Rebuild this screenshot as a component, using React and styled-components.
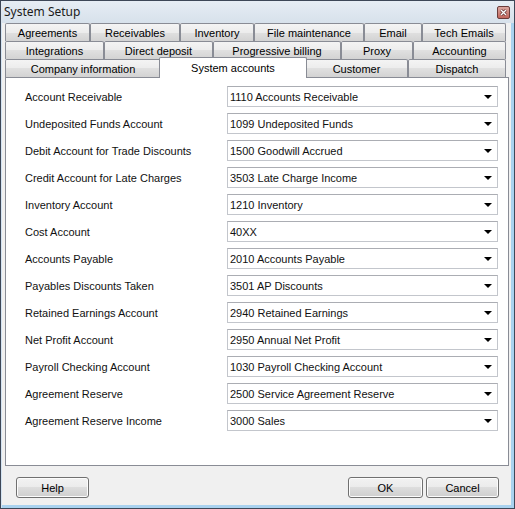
import React from 'react';
import styled, { createGlobalStyle } from 'styled-components';

const GlobalStyle = createGlobalStyle`
    html, body {
        margin: 0;
        padding: 0;
        background: #f0f0f0;
    }
    * {
        box-sizing: border-box;
    }
`;

const Window = styled.div`
    width: 515px;
    height: 509px;
    display: flex;
    flex-direction: column;
    border: 1px solid #3d4757;
    background: #f0f0f0;
    box-shadow: inset 1px 0 0 #d3e3f2, inset -3px -3px 0 #a9d2ef;
    font-family: "Liberation Sans", Arial, sans-serif;
    font-size: 11px;
    color: #000;
`;

const TitleBar = styled.div`
    height: 22px;
    display: flex;
    align-items: center;
    justify-content: space-between;
    padding: 0 4px 1px 3px;
    background: linear-gradient(#e6edf4, #d7e1eb);
`;

const Title = styled.span`
    font-family: "Noto Sans", "Open Sans", sans-serif;
    font-size: 12px;
    color: #1a1a1a;
`;

const CloseBox = styled.span`
    width: 13px;
    height: 13px;
    margin-top: 2px;
    display: flex;
    align-items: center;
    justify-content: center;
    border: 1px solid #6b3c3a;
    border-radius: 2px;
    background: linear-gradient(#dba69f, #c2665c);
`;

const TabStrip = styled.div`
    display: flex;
    flex-direction: column;
    padding: 0 5px 0 4px;
`;

const TabRow = styled.div`
    display: flex;
    height: 18px;
`;

const Tab = styled.div`
    width: ${p => p.$w}px;
    flex: none;
    display: flex;
    align-items: center;
    justify-content: center;
    border: 1px solid #898c95;
    border-bottom: none;
    border-radius: 2px 2px 0 0;
    background: linear-gradient(#f4f4f4 0%, #ececec 50%, #e0e0e0 50%, #d3d3d3 100%);
    white-space: nowrap;
`;

const ActiveTab = styled(Tab)`
    position: relative;
    z-index: 1;
    width: ${p => p.$w + 4}px;
    height: 21px;
    margin: -2px -2px -1px;
    background: #fff;
`;

const Panel = styled.div`
    height: 389px;
    margin: 0 5px 0 4px;
    border: 1px solid #898c95;
    background: #fff;
    padding: 8px 0 0 19px;
`;

const Grid = styled.div`
    display: grid;
    grid-template-columns: 202px 271px;
    row-gap: 6px;
    align-items: center;
`;

const Label = styled.span`
    white-space: nowrap;
    color: #111;
`;

const Combo = styled.div`
    height: 21px;
    display: flex;
    align-items: center;
    justify-content: space-between;
    padding: 0 5px 0 2px;
    border: 1px solid #c3c6cc;
    border-top-color: #abadb3;
    background: #fff;
    color: #111;
`;

const Arrow = styled.span`
    width: 0;
    height: 0;
    border-left: 4px solid transparent;
    border-right: 4px solid transparent;
    border-top: 4px solid #000;
    margin-top: 1px;
`;

const Footer = styled.div`
    height: 39px;
    display: flex;
    align-items: flex-start;
    padding: 11px 15px 0 15px;
    gap: 3px;
`;

const Spacer = styled.div`
    flex: 1;
`;

const Button = styled.button`
    width: ${p => p.$w}px;
    height: 21px;
    padding: 0;
    border: 1px solid #707070;
    border-radius: 3px;
    background: linear-gradient(#f2f2f2 0%, #ebebeb 50%, #dddddd 50%, #cfcfcf 100%);
    box-shadow: inset 0 0 0 1px #fcfcfc;
    font-family: "Liberation Sans", Arial, sans-serif;
    font-size: 11px;
    color: #000;
`;

const tabRows = [
    [
        ['Agreements', 85],
        ['Receivables', 90],
        ['Inventory', 74],
        ['File maintenance', 110],
        ['Email', 58],
        ['Tech Emails', 84],
    ],
    [
        ['Integrations', 99],
        ['Direct deposit', 109],
        ['Progressive billing', 128],
        ['Proxy', 72],
        ['Accounting', 93],
    ],
    [
        ['Company information', 156],
        ['System accounts', 144, true],
        ['Customer', 103],
        ['Dispatch', 98],
    ],
];

const accounts = [
    ['Account Receivable', '1110 Accounts Receivable'],
    ['Undeposited Funds Account', '1099 Undeposited Funds'],
    ['Debit Account for Trade Discounts', '1500 Goodwill Accrued'],
    ['Credit Account for Late Charges', '3503 Late Charge Income'],
    ['Inventory Account', '1210 Inventory'],
    ['Cost Account', '40XX'],
    ['Accounts Payable', '2010 Accounts Payable'],
    ['Payables Discounts Taken', '3501 AP Discounts'],
    ['Retained Earnings Account', '2940 Retained Earnings'],
    ['Net Profit Account', '2950 Annual Net Profit'],
    ['Payroll Checking Account', '1030 Payroll Checking Account'],
    ['Agreement Reserve', '2500 Service Agreement Reserve'],
    ['Agreement Reserve Income', '3000 Sales'],
];

export default function App() {
    return (
        <Window>
            <GlobalStyle />
            <TitleBar>
                <Title>System Setup</Title>
                <CloseBox>
                    <svg width="7" height="7" viewBox="0 0 7 7">
                        <path d="M1 1 L6 6 M6 1 L1 6" stroke="#5a2a28" strokeWidth="2.6" />
                        <path d="M1 1 L6 6 M6 1 L1 6" stroke="#fff" strokeWidth="1.4" />
                    </svg>
                </CloseBox>
            </TitleBar>
            <TabStrip>
                {tabRows.map((row, i) => (
                    <TabRow key={i}>
                        {row.map(([name, w, active]) =>
                            active
                                ? <ActiveTab key={name} $w={w}>{name}</ActiveTab>
                                : <Tab key={name} $w={w}>{name}</Tab>
                        )}
                    </TabRow>
                ))}
            </TabStrip>
            <Panel>
                <Grid>
                    {accounts.map(([label, value]) => (
                        <React.Fragment key={label}>
                            <Label>{label}</Label>
                            <Combo>
                                <span>{value}</span>
                                <Arrow />
                            </Combo>
                        </React.Fragment>
                    ))}
                </Grid>
            </Panel>
            <Footer>
                <Button $w={73}>Help</Button>
                <Spacer />
                <Button $w={75}>OK</Button>
                <Button $w={73}>Cancel</Button>
            </Footer>
        </Window>
    );
}
